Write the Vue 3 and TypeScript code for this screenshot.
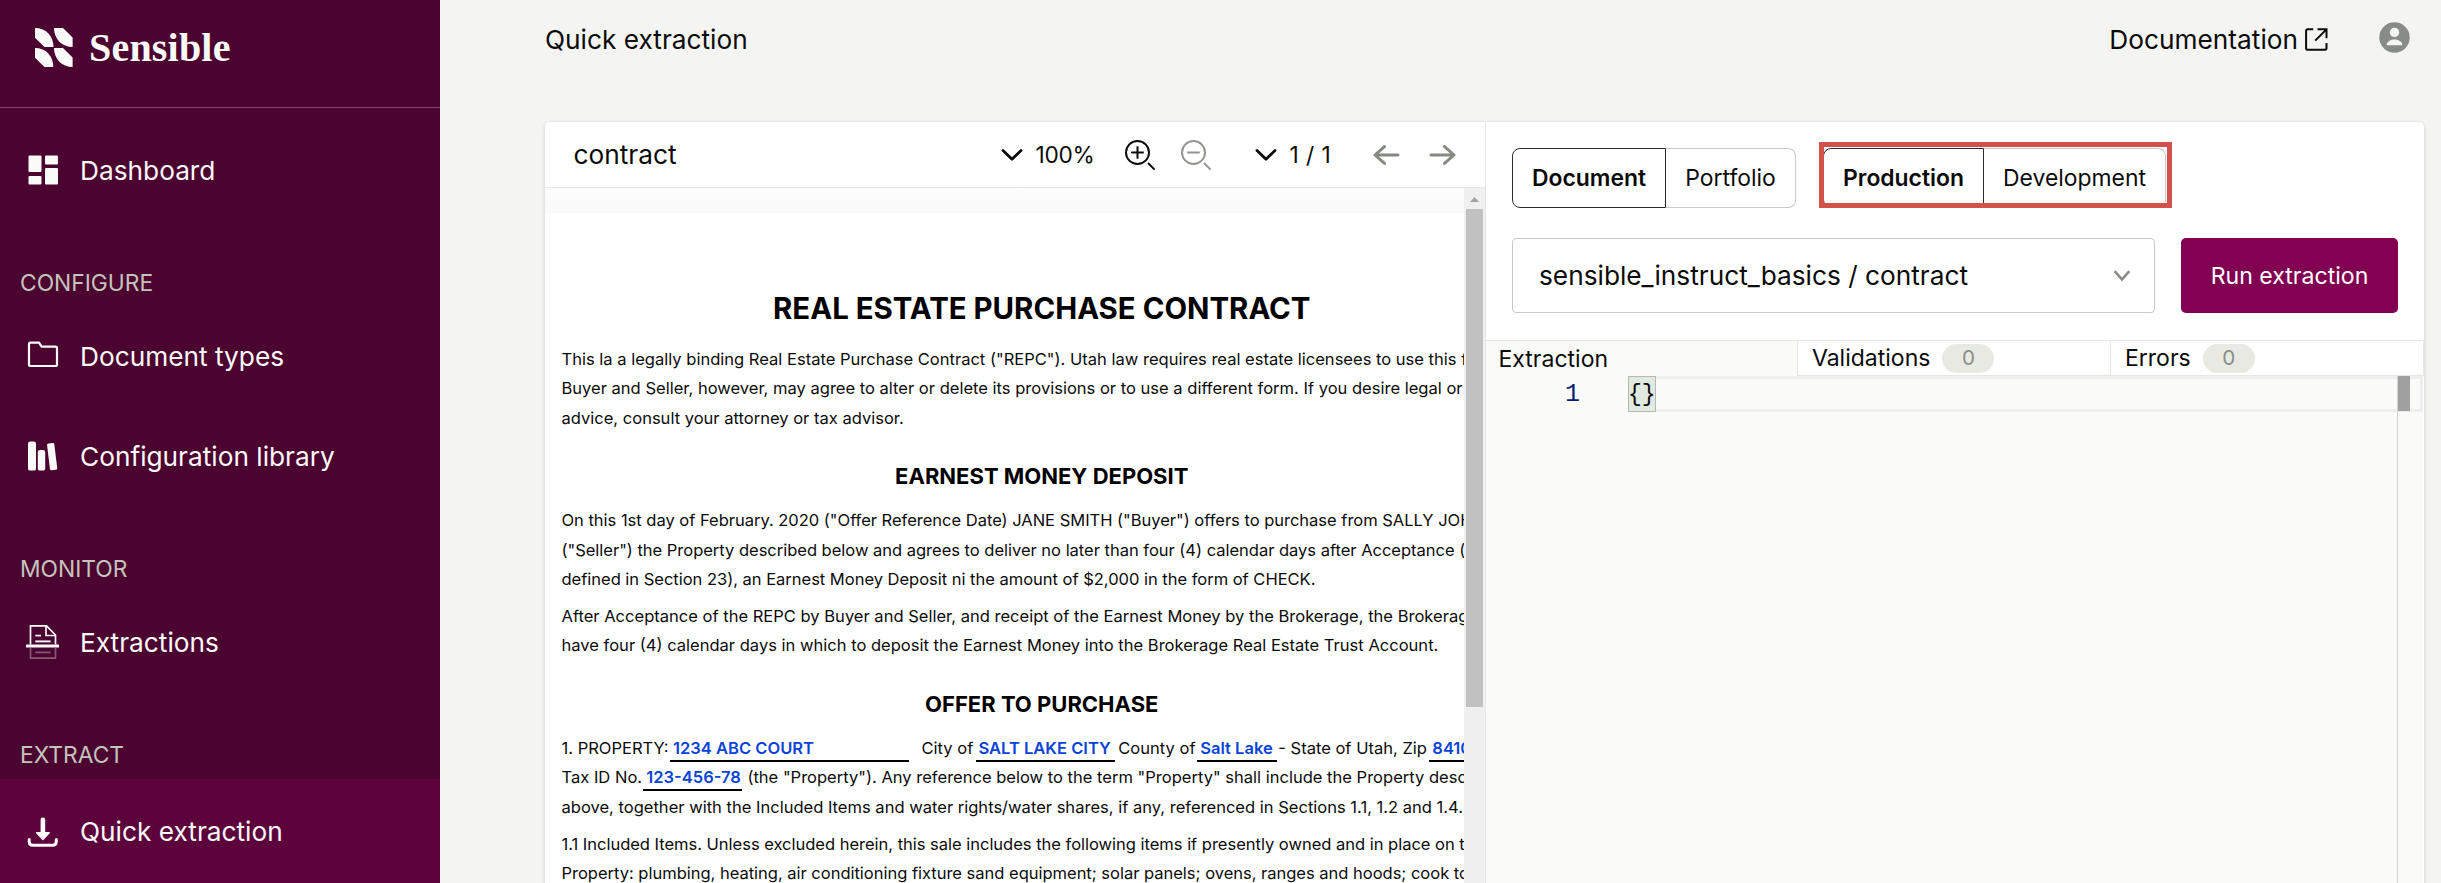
<script setup lang="ts">
interface NavItem {
  label: string
  icon: string
  active?: boolean
}

interface NavSection {
  heading?: string
  items: NavItem[]
}

const sections: NavSection[] = [
  { items: [{ label: 'Dashboard', icon: 'dashboard' }] },
  {
    heading: 'CONFIGURE',
    items: [
      { label: 'Document types', icon: 'folder' },
      { label: 'Configuration library', icon: 'library' },
    ],
  },
  { heading: 'MONITOR', items: [{ label: 'Extractions', icon: 'extractions' }] },
  { heading: 'EXTRACT', items: [{ label: 'Quick extraction', icon: 'download', active: true }] },
]

const intro: string[] = [
  'This la a legally binding Real Estate Purchase Contract ("REPC"). Utah law requires real estate licensees to use this form.',
  'Buyer and Seller, however, may agree to alter or delete its provisions or to use a different form. If you desire legal or tax',
  'advice, consult your attorney or tax advisor.',
]

const deposit: string[] = [
  'On this 1st day of February. 2020 ("Offer Reference Date) JANE SMITH ("Buyer") offers to purchase from SALLY JOHNSON',
  '("Seller") the Property described below and agrees to deliver no later than four (4) calendar days after Acceptance (as',
  'defined in Section 23), an Earnest Money Deposit ni the amount of $2,000 in the form of CHECK.',
]

const acceptance: string[] = [
  'After Acceptance of the REPC by Buyer and Seller, and receipt of the Earnest Money by the Brokerage, the Brokerage shall',
  'have four (4) calendar days in which to deposit the Earnest Money into the Brokerage Real Estate Trust Account.',
]

const included: string[] = [
  '1.1 Included Items. Unless excluded herein, this sale includes the following items if presently owned and in place on the',
  'Property: plumbing, heating, air conditioning fixture sand equipment; solar panels; ovens, ranges and hoods; cook tops;',
]
</script>

<template>
  <div class="app">
    <aside class="sidebar">
      <div class="brand">
        <svg class="brand-mark" viewBox="0 0 38 39">
          <path d="M0 0C11 0 18.5 8 18.5 19H9.5L0 9.7Z" />
          <path d="M19 0H28L37.6 9.5V19C27 19 19 11 19 0Z" />
          <path d="M0 20C11 20 18.3 28 18.3 39H9.5L0 29.7Z" />
          <path d="M19 20H28L37.6 29.5V39C27 39 19 31 19 20Z" />
        </svg>
        <span class="brand-name">Sensible</span>
      </div>
      <nav class="nav">
        <template v-for="(section, i) in sections" :key="i">
          <div v-if="section.heading" class="nav-heading">{{ section.heading }}</div>
          <a v-for="item in section.items" :key="item.label" class="nav-item" :class="{ active: item.active }">
            <svg class="nav-icon" viewBox="0 0 34 34">
              <g v-if="item.icon === 'dashboard'" fill="#fafaf8">
                <rect x="2.5" y="2.5" width="13" height="16.5" rx="1" />
                <rect x="19" y="2.5" width="13" height="9" rx="1" />
                <rect x="2.5" y="23" width="13" height="8.5" rx="1" />
                <rect x="19" y="15" width="13" height="16.5" rx="1" />
              </g>
              <path
                v-else-if="item.icon === 'folder'"
                d="M3 5.2Q3 3.7 4.5 3.7H13L15.6 7.7H29.5Q31 7.7 31 9.2V25.5Q31 27 29.5 27H4.5Q3 27 3 25.5Z"
                fill="none"
                stroke="#fafaf8"
                stroke-width="2.2"
                stroke-linejoin="round"
              />
              <g v-else-if="item.icon === 'library'" fill="#fafaf8">
                <rect x="2" y="2.6" width="8" height="29" rx="2.2" />
                <rect x="11.8" y="11" width="7.4" height="20.6" rx="2.2" />
                <rect x="22.5" y="4.2" width="7.3" height="27" rx="1.6" transform="rotate(-7 26 17.7)" />
              </g>
              <g v-else-if="item.icon === 'extractions'" fill="none" stroke="#fafaf8">
                <path d="M4.5 19.5V.9H20.5L29.5 10V19.5" stroke-width="1.7" />
                <path d="M20 1V10.5H29.5" stroke-width="1.7" />
                <path d="M9.3 10.6H15" stroke-width="1.7" />
                <path d="M9.3 16.4H24.6" stroke-width="1.9" />
                <path d="M0 21H33" stroke-width="3.2" />
                <path d="M4.5 23V33.2H29.5V23M9.3 27.3H24.6" stroke-width="1.7" opacity="0.35" />
              </g>
              <g v-else>
                <path
                  d="M3.2 24.5V26.5Q3.2 30.3 7 30.3H26.5Q30.3 30.3 30.3 26.5V24.5"
                  fill="none"
                  stroke="#fafaf8"
                  stroke-width="3"
                  stroke-linecap="round"
                />
                <rect x="14.6" y="2.6" width="4.6" height="17" rx="2.2" fill="#fafaf8" />
                <path d="M10.6 17.8H23.2L16.9 24.4Z" fill="#fafaf8" stroke="#fafaf8" stroke-width="1.4" stroke-linejoin="round" />
              </g>
            </svg>
            <span>{{ item.label }}</span>
          </a>
        </template>
      </nav>
    </aside>

    <main class="main">
      <header class="topbar">
        <h1 class="page-title">Quick extraction</h1>
        <a class="docs-link">Documentation</a>
        <svg class="external" viewBox="0 0 23 23" fill="none" stroke="#0b0b0b" stroke-width="2">
          <path d="M8.2 1.3H2.5Q1.1 1.3 1.1 2.7V20.4Q1.1 21.8 2.5 21.8H20.1Q21.5 21.8 21.5 20.4V15" />
          <path d="M12.5 1.3H21.5V10.2M21.2 1.6L10.2 12.6" />
        </svg>
        <svg class="account" viewBox="0 0 31 31">
          <circle cx="15.5" cy="15.5" r="15.2" fill="#888c86" />
          <circle cx="15.5" cy="10.4" r="4.7" fill="#f4f4f2" />
          <path d="M7.7 23.2C7.7 19.4 12 17.6 15.5 17.6S23.3 19.4 23.3 23.2Z" fill="#f4f4f2" />
        </svg>
      </header>

      <div class="workspace">
        <section class="viewer">
          <div class="viewer-bar">
            <span class="file-name">contract</span>
            <svg class="chevron" viewBox="0 0 22 14"><path d="M2 2.5L11 11.2L20 2.5" /></svg>
            <span class="zoom-value">100%</span>
            <svg class="lens" viewBox="0 0 31 31">
              <circle cx="12.5" cy="12.5" r="11.5" />
              <path d="M6.2 12.5H18.8M12.5 6.2V18.8M23 23L29.6 29.6" />
            </svg>
            <svg class="lens muted" viewBox="0 0 31 31">
              <circle cx="12.5" cy="12.5" r="11.5" />
              <path d="M6.2 12.5H18.8M23 23L29.6 29.6" />
            </svg>
            <svg class="chevron" viewBox="0 0 22 14"><path d="M2 2.5L11 11.2L20 2.5" /></svg>
            <span class="page-value">1 / 1</span>
            <svg class="arrow" viewBox="0 0 27 20"><path d="M11.5 1.6L2 10L11.5 18.4M2 10H25" /></svg>
            <svg class="arrow" viewBox="0 0 27 20"><path d="M15.5 1.6L25 10L15.5 18.4M25 10H2" /></svg>
          </div>
          <div class="viewer-body">
            <div class="sheet-scroll">
              <article class="sheet">
                <h2 class="doc-title">REAL ESTATE PURCHASE CONTRACT</h2>
                <div class="para first">
                  <div v-for="line in intro" :key="line" class="line">{{ line }}</div>
                </div>
                <h3 class="doc-heading">EARNEST MONEY DEPOSIT</h3>
                <div class="para tight">
                  <div v-for="line in deposit" :key="line" class="line">{{ line }}</div>
                </div>
                <div class="para follow">
                  <div v-for="line in acceptance" :key="line" class="line">{{ line }}</div>
                </div>
                <h3 class="doc-heading">OFFER TO PURCHASE</h3>
                <div class="para">
                  <div class="line fields">
                    <span class="lead">1. PROPERTY:</span>
                    <span class="field street">1234 ABC COURT</span>
                    <span class="city-label">City of</span>
                    <span class="field city">SALT LAKE CITY</span>
                    <span class="county-label">County of</span>
                    <span class="field county">Salt Lake</span>
                    <span class="state-label">- State of Utah, Zip</span>
                    <span class="field zip">84106</span>
                  </div>
                  <div class="line fields">
                    <span class="tax-label">Tax ID No.</span>
                    <span class="field tax">123-456-78</span>
                    <span class="tax-rest">(the "Property"). Any reference below to the term "Property" shall include the Property described</span>
                  </div>
                  <div class="line">above, together with the Included Items and water rights/water shares, if any, referenced in Sections 1.1, 1.2 and 1.4.</div>
                </div>
                <div class="para follow tight">
                  <div v-for="line in included" :key="line" class="line">{{ line }}</div>
                </div>
              </article>
            </div>
            <div class="scrollbar">
              <svg class="scroll-up" viewBox="0 0 21 21"><path d="M6 14H15L10.5 9Z" fill="#a3a3a3" /></svg>
              <div class="scroll-thumb"></div>
            </div>
          </div>
        </section>

        <section class="results">
          <div class="toggles">
            <div class="toggle">
              <button class="option selected document">Document</button>
              <button class="option">Portfolio</button>
            </div>
            <div class="toggle env">
              <button class="option selected production">Production</button>
              <button class="option">Development</button>
              <div class="callout"></div>
            </div>
          </div>
          <div class="run-row">
            <div class="select">
              <span>sensible_instruct_basics / contract</span>
              <svg class="select-arrow" viewBox="0 0 18 12"><path d="M1.7 1.2L9 9.6L16.3 1.2" /></svg>
            </div>
            <button class="run">Run extraction</button>
          </div>
          <div class="tabs">
            <div class="tab current">Extraction</div>
            <div class="tab">Validations<span class="badge">0</span></div>
            <div class="tab">Errors<span class="badge">0</span></div>
          </div>
          <div class="editor">
            <div class="code-line">
              <span class="line-no">1</span>
              <span class="braces">{}</span>
              <span class="line-fill"></span>
            </div>
            <div class="ruler"><div class="ruler-mark"></div></div>
          </div>
        </section>
      </div>
    </main>
  </div>
</template>

<style>
body {
  margin: 0;
  overflow: hidden;
}
</style>

<style scoped>
.app {
  display: flex;
  width: 2441px;
  height: 883px;
  overflow: hidden;
  background: #f4f4f2;
  color: #0b0b0b;
  font-family: Inter, "Liberation Sans", sans-serif;
  font-size: 26.25px;
  white-space: nowrap;
}
.app *,
.app *::before {
  box-sizing: border-box;
}
svg {
  display: block;
  flex: none;
}
button {
  font-family: inherit;
  color: inherit;
  margin: 0;
  padding: 0;
}

/* Sidebar */
.sidebar {
  flex: none;
  width: 440px;
  height: 884px;
  background: #4b0330;
  color: #fafaf8;
}
.brand {
  display: flex;
  height: 108px;
  padding: 28px 0 0 35px;
  border-bottom: 1px solid #804a6b;
}
.brand-mark {
  width: 38px;
  height: 39px;
  fill: #fafaf8;
}
.brand-name {
  margin: 0 0 0 16px;
  font: 700 40px/40px "Liberation Serif", serif;
  letter-spacing: 0.2px;
}
.nav {
  padding-top: 12px;
}
.nav-heading {
  height: 86px;
  padding: 50px 0 0 20px;
  color: #c4c4bc;
  font-size: 22.8px;
  line-height: 25px;
}
.nav-item {
  display: flex;
  align-items: center;
  height: 100px;
  padding-left: 26px;
  gap: 20px;
}
.nav-item.active {
  height: 105px;
  margin-top: 1px;
  background: #5c033c;
}
.nav-icon {
  width: 34px;
  height: 34px;
}

/* Top bar */
.main {
  flex: 1;
  min-width: 0;
  padding-left: 105px;
}
.topbar {
  display: flex;
  align-items: center;
  height: 79px;
  margin-bottom: 43px;
  padding-right: 31px;
}
.page-title {
  flex: 1;
  margin: 0;
  font-size: inherit;
  font-weight: 400;
}
.docs-link {
  margin-right: 7px;
}
.external {
  width: 23px;
  height: 23px;
  margin-right: 51px;
}
.account {
  width: 31px;
  height: 31px;
  margin-top: -4px;
}

/* Workspace panel */
.workspace {
  display: flex;
  width: 1879px;
  height: 780px;
  border-radius: 5px;
  background: #fff;
  box-shadow: 0 1px 4px rgba(0, 0, 0, 0.16);
}
.viewer {
  flex: none;
  width: 941px;
  border-right: 1px solid #e6e6e4;
}
.viewer-bar {
  display: flex;
  align-items: center;
  height: 66px;
  border-bottom: 1px solid #e6e6e4;
}
.file-name {
  flex: 1;
  padding-left: 28.5px;
}
.chevron {
  width: 22px;
  height: 14px;
  fill: none;
  stroke: #0b0b0b;
  stroke-width: 2.8;
  stroke-linecap: round;
  stroke-linejoin: round;
}
.zoom-value,
.page-value {
  font-size: 22.7px;
  margin-top: -1px;
}
.zoom-value {
  width: 102px;
  padding-left: 12.5px;
  letter-spacing: -0.3px;
}
.lens {
  width: 31px;
  height: 31px;
  margin: 2px 25px 0 0;
  fill: none;
  stroke: #0b0b0b;
  stroke-width: 2;
}
.lens.muted {
  stroke: #92958f;
  margin-right: 43px;
}
.page-value {
  width: 96px;
  padding-left: 12.5px;
  letter-spacing: 0.45px;
}
.arrow {
  width: 27px;
  height: 20px;
  margin-right: 29px;
  fill: none;
  stroke: #858a83;
  stroke-width: 3;
  stroke-linecap: round;
  stroke-linejoin: round;
}
.viewer-body {
  display: flex;
  height: 714px;
}
.sheet-scroll {
  flex: none;
  width: 919px;
  overflow: hidden;
  padding-top: 25px;
  background: linear-gradient(#fdfdfd, #fafafa 25px);
}
.sheet {
  width: 1015px;
  height: 700px;
  padding: 77.6px 38px 0 16.5px;
  background: #fff;
}
.doc-title,
.doc-heading {
  margin: 0;
  text-align: center;
  font-weight: 700;
  color: #000;
}
.doc-title {
  font-size: 29.4px;
  line-height: 36px;
}
.doc-heading {
  margin: 29.4px 0 16px;
  font-size: 22px;
  line-height: 28px;
}
.para {
  font-size: 16.55px;
}
.para.tight {
  letter-spacing: -0.025px;
}
.para.first {
  margin-top: 18.2px;
}
.para.follow {
  margin-top: 7.4px;
}
.line {
  height: 29.4px;
  line-height: 29.4px;
}
.fields {
  display: flex;
}
.fields > span {
  flex: none;
}
.field {
  height: 27.6px;
  padding-left: 3px;
  border-bottom: 2px solid #000;
  color: #0a43d8;
  font-weight: 600;
}
.lead {
  width: 108.5px;
}
.street {
  width: 239px;
}
.city-label {
  width: 66.5px;
  padding-left: 12.5px;
}
.city {
  width: 139.8px;
}
.county-label {
  width: 82px;
  padding-left: 3px;
}
.county {
  width: 80px;
}
.state-label {
  width: 152px;
  padding-left: 1px;
}
.zip {
  width: 80px;
}
.tax-label {
  width: 81.2px;
}
.tax {
  width: 99.3px;
  padding-left: 3.6px;
}
.tax-rest {
  padding-left: 5.4px;
}
.scrollbar {
  flex: none;
  width: 21px;
  background: #f0f0f0;
}
.scroll-up {
  width: 21px;
  height: 21px;
}
.scroll-thumb {
  width: 17px;
  height: 498px;
  margin-left: 2px;
  background: #c1c1c1;
}

/* Extraction panel */
.results {
  flex: 1;
  min-width: 0;
}
.toggles {
  display: flex;
  padding: 26px 0 0 26px;
  gap: 27px;
}
.toggle {
  position: relative;
  display: flex;
  height: 60px;
}
.option {
  width: 130px;
  border: 1px solid #c8cac4;
  border-left: 0;
  border-radius: 0 8px 8px 0;
  background: #fff;
  font-size: 22.9px;
}
.option.selected {
  border: 1px solid #2b2b2b;
  border-radius: 8px 0 0 8px;
  font-weight: 600;
}
.option.document {
  width: 154px;
}
.option.production {
  width: 161px;
}
.env .option:nth-child(2) {
  width: 182px;
}
.callout {
  position: absolute;
  left: -4px;
  top: -6px;
  width: 353px;
  height: 66px;
  border: 5px solid #d0524b;
}
.run-row {
  display: flex;
  padding: 30px 25px 27px 26px;
  gap: 26px;
}
.select {
  display: flex;
  align-items: center;
  justify-content: space-between;
  width: 643px;
  height: 75px;
  padding: 0 23px 0 26px;
  border: 1px solid #c8cac4;
  border-radius: 4px;
}
.select-arrow {
  width: 18px;
  height: 12px;
  fill: none;
  stroke: #8a8d88;
  stroke-width: 2.6;
}
.run {
  width: 217px;
  height: 75px;
  border: 0;
  border-radius: 5px;
  background: #820051;
  color: #fff;
  font-size: 23.1px;
}
.tabs {
  display: grid;
  grid-template-columns: 311px 313px 314px;
  height: 36px;
  border-top: 1px solid #e8e8e3;
  font-size: 23px;
}
.tab {
  display: flex;
  align-items: center;
  padding-left: 14px;
  border-left: 1px solid #e8e8e3;
  border-bottom: 1px solid #e8e8e3;
}
.tab:last-child {
  border-right: 1px solid #e8e8e3;
}
.tab.current {
  padding-left: 12.5px;
  border: 0;
  background: #fafaf8;
}
.badge {
  width: 52px;
  height: 29px;
  margin-left: 12px;
  border-radius: 14.5px;
  background: #e9e9e4;
  color: #8a8e87;
  font-size: 20.6px;
  line-height: 27px;
  text-align: center;
}
.editor {
  display: flex;
  width: 937px;
  height: 526px;
  background: #fafaf8;
  position: relative;
}
.code-line {
  display: flex;
  flex: 1;
  height: 36px;
  font: 25px/38px "Liberation Mono", monospace;
}
.line-no {
  width: 142px;
  padding-right: 48px;
  text-align: right;
  color: #0b216f;
}
.braces {
  width: 28px;
  border: 1px solid #b5b8b3;
  background: #e1eae0;
  font-size: 23px;
  line-height: 37px;
  text-indent: -1px;
}
.line-fill {
  flex: 1;
  border: 3px solid #eeeeee;
  border-left: 0;
}
.ruler {
  position: absolute;
  top: 0;
  right: 0;
  width: 26px;
  height: 100%;
  border-left: 1px solid #d3d3d1;
}
.ruler-mark {
  width: 12px;
  height: 35px;
  background: #a0a0a0;
}
</style>
